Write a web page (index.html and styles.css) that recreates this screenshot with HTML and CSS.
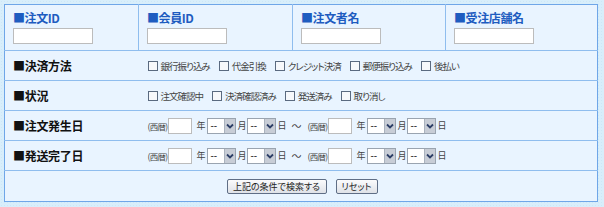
FILE: index.html
```html
<!DOCTYPE html>
<html lang="ja">
<head>
  <meta charset="UTF-8" />
  <title>注文検索</title>
  <link rel="stylesheet" href="styles.css">
</head>
<body>
  <div class="wrap">
    <table class="search">
      <tr class="head">
        <td class="c1"><div class="hlabel">■注文ID</div><input type="text" class="txt"></td>
        <td class="c2"><div class="hlabel">■会員ID</div><input type="text" class="txt"></td>
        <td class="c3"><div class="hlabel">■注文者名</div><input type="text" class="txt"></td>
        <td class="c4"><div class="hlabel">■受注店舗名</div><input type="text" class="txt"></td>
      </tr>
      <tr class="row">
        <th>■決済方法</th>
        <td colspan="3">
          <div class="opts">
            <label><input type="checkbox">銀行振り込み</label>
            <label><input type="checkbox">代金引換</label>
            <label><input type="checkbox">クレジット決済</label>
            <label><input type="checkbox">郵便振り込み</label>
            <label><input type="checkbox">後払い</label>
          </div>
        </td>
      </tr>
      <tr class="row">
        <th>■状況</th>
        <td colspan="3">
          <div class="opts">
            <label><input type="checkbox">注文確認中</label>
            <label><input type="checkbox">決済確認済み</label>
            <label><input type="checkbox">発送済み</label>
            <label><input type="checkbox">取り消し</label>
          </div>
        </td>
      </tr>
      <tr class="row">
        <th>■注文発生日</th>
        <td colspan="3">
          <div class="dates">
            <span class="era">(西暦)</span><input type="text" class="year"><span class="u">年</span>
            <span class="sel"><select><option>--</option></select><span class="btn"><svg viewBox="0 0 8 8"><path d="M1 2.5 L4 5.5 L7 2.5" /></svg></span></span><span class="u">月</span>
            <span class="sel"><select><option>--</option></select><span class="btn"><svg viewBox="0 0 8 8"><path d="M1 2.5 L4 5.5 L7 2.5" /></svg></span></span><span class="u">日</span>
            <span class="tilde">～</span>
            <span class="era">(西暦)</span><input type="text" class="year"><span class="u">年</span>
            <span class="sel"><select><option>--</option></select><span class="btn"><svg viewBox="0 0 8 8"><path d="M1 2.5 L4 5.5 L7 2.5" /></svg></span></span><span class="u">月</span>
            <span class="sel"><select><option>--</option></select><span class="btn"><svg viewBox="0 0 8 8"><path d="M1 2.5 L4 5.5 L7 2.5" /></svg></span></span><span class="u">日</span>
          </div>
        </td>
      </tr>
      <tr class="row">
        <th>■発送完了日</th>
        <td colspan="3">
          <div class="dates">
            <span class="era">(西暦)</span><input type="text" class="year"><span class="u">年</span>
            <span class="sel"><select><option>--</option></select><span class="btn"><svg viewBox="0 0 8 8"><path d="M1 2.5 L4 5.5 L7 2.5" /></svg></span></span><span class="u">月</span>
            <span class="sel"><select><option>--</option></select><span class="btn"><svg viewBox="0 0 8 8"><path d="M1 2.5 L4 5.5 L7 2.5" /></svg></span></span><span class="u">日</span>
            <span class="tilde">～</span>
            <span class="era">(西暦)</span><input type="text" class="year"><span class="u">年</span>
            <span class="sel"><select><option>--</option></select><span class="btn"><svg viewBox="0 0 8 8"><path d="M1 2.5 L4 5.5 L7 2.5" /></svg></span></span><span class="u">月</span>
            <span class="sel"><select><option>--</option></select><span class="btn"><svg viewBox="0 0 8 8"><path d="M1 2.5 L4 5.5 L7 2.5" /></svg></span></span><span class="u">日</span>
          </div>
        </td>
      </tr>
      <tr class="row foot">
        <td colspan="4">
          <div class="buttons">
            <button type="button">上記の条件で検索する</button>
            <button type="button">リセット</button>
          </div>
        </td>
      </tr>
    </table>
  </div>
</body>
</html>
```

FILE: styles.css
```css
html, body {
  margin: 0;
  padding: 0;
}

body {
  font-family: "Noto Sans CJK JP", "Liberation Sans", sans-serif;
  background-color: #d8eefb;
  background-image: radial-gradient(#cde7f8 0.6px, transparent 0.7px);
  background-size: 3px 3px;
  width: 604px;
  height: 207px;
  overflow: hidden;
}

.wrap {
  padding: 4px 0 0 4px;
}

.search {
  width: 594px;
  border-collapse: collapse;
  background: #e9f4ff;
  border: 1px solid #6fa6e8;
  table-layout: fixed;
}

.search td, .search th {
  padding: 0;
  vertical-align: middle;
}

/* header row */
.head td {
  height: 45px;
  padding: 0 0 0 8px;
  vertical-align: top;
  border-right: 1px solid #8fbdee;
  border-bottom: 1px solid #8fbdee;
}
.head td:last-child { border-right: none; }
.head .c1 { width: 125px; }
.head .c2 { width: 145px; }
.head .c3 { width: 144px; }

.hlabel {
  margin-top: 6px;
  height: 14px;
  line-height: 14px;
  font-size: 12px;
  font-weight: bold;
  color: #1e5cc0;
  letter-spacing: -0.4px;
}

.txt {
  display: block;
  box-sizing: border-box;
  width: 80px;
  height: 16px;
  margin: 3px 0 0 0;
  border: 1px solid #bcbcbc;
  background: #fff;
  padding: 0;
}

/* normal rows */
.row th, .row td {
  height: 29px;
  border-bottom: 1px solid #8fbdee;
}
.row th {
  text-align: left;
  padding-left: 8px;
  font-size: 12px;
  font-weight: bold;
  color: #111;
  letter-spacing: -0.3px;
}
.row td {
  padding-left: 9px;
}
.row.foot td {
  border-bottom: none;
  height: 30px;
  padding-left: 0;
}

.opts {
  display: flex;
  align-items: center;
  gap: 9px;
  font-size: 9.5px;
  color: #444;
  letter-spacing: -1px;
  font-feature-settings: "palt" 1;
}
.opts label {
  display: flex;
  align-items: center;
}
.opts input {
  appearance: none;
  box-sizing: border-box;
  width: 10px;
  height: 10px;
  margin: 0 3px 0 0;
  border: 1px solid #5a6a80;
  background: #f6f8fb;
}

.dates {
  display: flex;
  align-items: center;
  font-size: 9px;
  color: #444;
  font-feature-settings: "palt" 1;
}
.era {
  font-size: 8.5px;
  letter-spacing: -0.7px;
  margin-right: 1px;
}
.year {
  box-sizing: border-box;
  width: 24px;
  height: 16px;
  margin: 0;
  padding: 0;
  border: 1px solid #bcbcbc;
  background: #fff;
}
.u {
  margin: 0 2px 0 4px;
}
.sel + .u {
  margin: 0 1px 0 1px;
}
.sel {
  display: inline-flex;
  box-sizing: border-box;
  height: 16px;
  width: 29px;
  border: 1px solid #9aa4b0;
  background: #fff;
}
.sel select {
  appearance: none;
  border: none;
  background: transparent;
  width: 17px;
  padding: 0 0 0 2px;
  margin: 0;
  font-family: "Liberation Sans", sans-serif;
  font-size: 10px;
  color: #333;
}
.sel .btn {
  width: 11px;
  background: #c8cdd6;
  border-left: 1px solid #aab2bd;
  display: flex;
  align-items: center;
  justify-content: center;
}
.sel svg {
  width: 8px;
  height: 8px;
  fill: none;
  stroke: #2c3e66;
  stroke-width: 1.8;
}
.tilde {
  margin: 0 6px 0 4px;
  font-size: 10px;
}

.buttons {
  display: flex;
  justify-content: center;
  gap: 9px;
  padding-left: 2px;
}
.buttons button {
  height: 15px;
  box-sizing: border-box;
  padding: 0;
  white-space: nowrap;
  font-family: "Noto Sans CJK JP", sans-serif;
  font-size: 9px;
  line-height: 13px;
  color: #222;
  border: 1px solid #5f6e86;
  border-radius: 2px;
  background: linear-gradient(#fbfbfc, #dfe2e8);
  font-feature-settings: "palt" 1;
}
.buttons button:first-child {
  width: 100px;
}
.buttons button:last-child {
  width: 42px;
}
```
